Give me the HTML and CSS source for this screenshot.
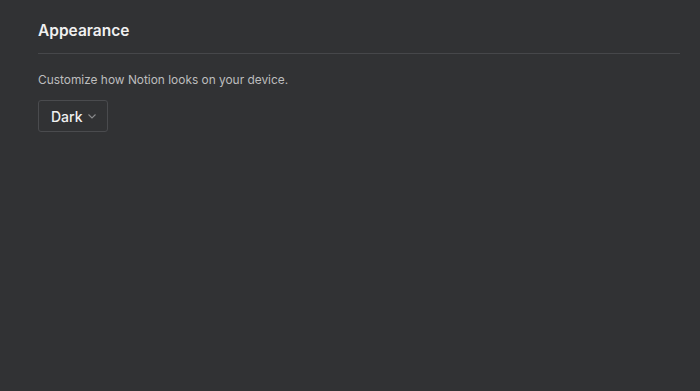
FILE: index.html
```html
<!DOCTYPE html>
<html lang="en">
<head>
<meta charset="utf-8">
<title>Appearance</title>
<link rel="stylesheet" href="styles.css">
</head>
<body>
<main class="settings">
  <h1 class="title">Appearance</h1>
  <div class="divider"></div>
  <p class="desc">Customize how Notion looks on your device.</p>
  <button class="select" type="button">
    <span class="select-label">Dark</span>
    <svg class="chevron" width="8" height="5" viewBox="0 0 8 5" aria-hidden="true">
      <path d="M0.5 0.5 L4 4 L7.5 0.5" fill="none" stroke="#8a8b8d" stroke-width="1.1"/>
    </svg>
  </button>
</main>
</body>
</html>
```
FILE: styles.css
```css
html, body {
  margin: 0;
  padding: 0;
  background: #313234;
  height: 100%;
}
body {
  font-family: Inter, "Liberation Sans", sans-serif;
  color: #e6e6e6;
}
.settings {
  padding: 20px 20px 0 38px;
  display: flex;
  flex-direction: column;
  align-items: flex-start;
}
.title {
  margin: 0;
  font-size: 15.5px;
  font-weight: 600;
  line-height: 22px;
  color: #f0f0f0;
}
.divider {
  align-self: stretch;
  height: 1px;
  background: #46474a;
  margin-top: 11px;
}
.desc {
  margin: 18px 0 0 0;
  font-size: 11.9px;
  line-height: 16px;
  color: #bdbdbe;
}
.select {
  margin-top: 12px;
  width: 70px;
  height: 32px;
  box-sizing: border-box;
  border: 1px solid #4a4b4e;
  border-radius: 3px;
  background: transparent;
  display: flex;
  align-items: center;
  padding: 0 0 0 12px;
  gap: 5px;
  font-family: inherit;
  cursor: pointer;
}
.select-label {
  font-size: 14px;
  font-weight: 500;
  color: #f0f0f0;
}
.chevron {
  display: block;
  margin-top: 1px;
}
```
